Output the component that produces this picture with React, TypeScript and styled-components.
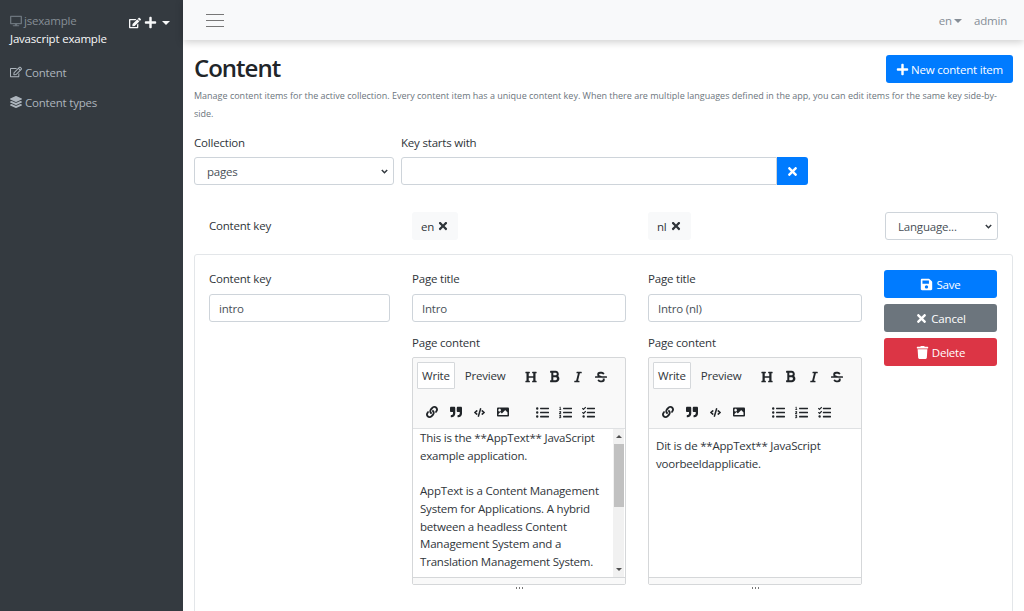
import React from "react"
import styled, { createGlobalStyle } from "styled-components"
import {
  FaBold, FaCode, FaDesktop, FaEdit, FaHeading, FaImage, FaItalic, FaLayerGroup, FaLink,
  FaListOl, FaListUl, FaPlus, FaQuoteRight, FaRegEdit, FaSave, FaStrikethrough, FaTasks, FaTimes, FaTrash,
} from "react-icons/fa"

const chevron = `url("data:image/svg+xml,%3Csvg xmlns='http://www.w3.org/2000/svg' width='7' height='5' viewBox='0 0 7 5'%3E%3Cpath d='M.8.9l2.7 2.8L6.2.9' fill='none' stroke='%23343a40' stroke-width='1.5'/%3E%3C/svg%3E")`

const Global = createGlobalStyle`
  html, body { margin: 0; padding: 0; height: 100%; overflow: hidden; }
  body { font-family: "Open Sans", "Noto Sans", "Liberation Sans", sans-serif; font-size: 11.5px; letter-spacing: -0.2px; color: #2f353a; background: #fff; }
  * { box-sizing: border-box; }
`

const Page = styled.div`
  display: flex;
  width: 1024px;
  height: 611px;
  overflow: hidden;
`
const Sidebar = styled.aside`
  width: 183px;
  flex: none;
  background: #343a40;
  padding: 12px 10px;
`
const Brand = styled.div`
  display: flex;
  justify-content: space-between;
  align-items: flex-start;
`
const AppName = styled.div`
  color: #868e96;
  line-height: 17px;
  display: flex;
  align-items: center;
  gap: 2px;
  svg { color: #6c757d; }
`
const BrandTools = styled.div`
  display: flex;
  align-items: center;
  gap: 3px;
  color: #f8f9fa;
  padding: 3px 3px 0 0;
  margin-top: 1px;
`
const Caret = styled.span<{ $color?: string }>`
  display: inline-block;
  width: 0;
  height: 0;
  margin-left: 2px;
  vertical-align: 2px;
  border-top: 4px solid ${(p) => p.$color || "#f8f9fa"};
  border-left: 4px solid transparent;
  border-right: 4px solid transparent;
`
const AppTitle = styled.div`
  color: #f8f9fa;
  line-height: 17px;
  margin-top: 1px;
`
const SideNav = styled.nav`
  margin-top: 10px;
`
const SideLink = styled.div`
  display: flex;
  align-items: center;
  gap: 3px;
  height: 30px;
  color: #adb5bd;
`
const Column = styled.div`
  flex: 1;
  min-width: 0;
  display: flex;
  flex-direction: column;
`
const TopBar = styled.header`
  height: 40px;
  flex: none;
  background: #f8f9fa;
  box-shadow: 0 2px 8px rgba(0, 0, 0, 0.2);
  display: flex;
  align-items: center;
  justify-content: space-between;
  padding: 0 17px 0 23px;
  position: relative;
  z-index: 1;
`
const Burger = styled.div`
  width: 18px;
  height: 13px;
  border-top: 1px solid #777;
  border-bottom: 1px solid #777;
  position: relative;
  &::after {
    content: "";
    position: absolute;
    left: 0;
    right: 0;
    top: 5px;
    height: 1px;
    background: #777;
  }
`
const TopRight = styled.div`
  display: flex;
  align-items: center;
  gap: 12px;
  color: #868e96;
`
const Main = styled.main`
  padding: 13px 11px 0;
`
const TitleRow = styled.div`
  display: flex;
  justify-content: space-between;
  align-items: flex-start;
`
const Title = styled.h1`
  margin: 0;
  font-size: 24px;
  line-height: 30px;
  font-weight: 600;
  letter-spacing: -1px;
  color: #212529;
`
const Button = styled.button<{ $bg: string; $full?: boolean }>`
  font: inherit;
  letter-spacing: inherit;
  color: #fff;
  background: ${(p) => p.$bg};
  border: 0;
  border-radius: 3px;
  height: 28px;
  padding: 0 9px;
  width: ${(p) => (p.$full ? "100%" : "auto")};
  display: flex;
  align-items: center;
  justify-content: center;
  gap: 3px;
`
const NewButton = styled(Button)`
  margin-top: 2px;
  width: 127px;
  padding: 0;
  gap: 2px;
`
const Lead = styled.p`
  margin: 4px 0 0;
  font-size: 9px;
  line-height: 18px;
  letter-spacing: 0;
  color: #6c757d;
`
const FilterRow = styled.div`
  display: flex;
  gap: 7px;
  margin-top: 11px;
`
const Field = styled.div<{ $width?: number }>`
  width: ${(p) => (p.$width ? p.$width + "px" : "auto")};
  flex: ${(p) => (p.$width ? "none" : "1")};
`
const Label = styled.label`
  display: block;
  line-height: 17px;
  margin-bottom: 6px;
`
const CardLabel = styled(Label)`
  margin-bottom: 7px;
`
const SectionLabel = styled(Label)`
  margin-top: 12px;
`
const Select = styled.select`
  font: inherit;
  letter-spacing: inherit;
  color: #495057;
  width: 100%;
  height: 28px;
  appearance: none;
  background: #fff ${chevron} no-repeat right 5px center;
  border: 1px solid #ced4da;
  border-radius: 3px;
  padding: 0 12px;
`
const Input = styled.input`
  font: inherit;
  letter-spacing: inherit;
  color: #495057;
  width: 100%;
  height: 28px;
  background: #fff;
  border: 1px solid #ced4da;
  border-radius: 3px;
  padding: 0 9px;
`
const InputGroup = styled.div`
  display: flex;
  width: 407px;
  input { border-radius: 3px 0 0 3px; }
`
const ClearButton = styled(Button)`
  width: 31px;
  flex: none;
  border-radius: 0 3px 3px 0;
  padding: 0;
`
const HeaderRow = styled.div`
  display: grid;
  grid-template-columns: 203px 236px 237px 113px;
  align-items: center;
  margin-top: 27px;
  padding-left: 15px;
`
const HeaderKey = styled.div`
  margin-top: -2px;
`
const LangChip = styled.div`
  display: inline-flex;
  align-items: center;
  gap: 3px;
  height: 28px;
  padding: 0 9px;
  background: #f8f9fa;
  border-radius: 3px;
`
const Card = styled.section`
  display: grid;
  grid-template-columns: 203px 236px 236px 113px;
  margin-top: 14px;
  height: 400px;
  padding: 15px 15px 0 14px;
  border: 1px solid #e3e6e9;
  border-radius: 3px;
`
const CardColumn = styled.div`
  padding-right: 22px;
`
const ActionColumn = styled.div`
  display: flex;
  flex-direction: column;
  gap: 6px;
`
const Editor = styled.div`
  border: 1px solid #d5d7d9;
  border-radius: 2px;
  height: 228px;
  display: flex;
  flex-direction: column;
  background: #f9f9f9;
`
const ToolRows = styled.div`
  height: 71px;
  flex: none;
  border-bottom: 1px solid #dfe1e3;
  padding: 4px 4px 0;
`
const ToolRow = styled.div`
  display: flex;
  align-items: center;
  height: 27px;
  & + & { margin-top: 11px; height: 24px; }
`
const Tab = styled.div<{ $active?: boolean }>`
  height: 27px;
  display: flex;
  align-items: center;
  padding: 0 4px;
  margin-right: 5px;
  border: 1px solid ${(p) => (p.$active ? "#d5d8db" : "transparent")};
  background: ${(p) => (p.$active ? "#fff" : "transparent")};
  border-radius: 1px;
`
const ToolGroup = styled.div<{ $gap?: number; $left?: number; $top?: number }>`
  display: flex;
  align-items: center;
  gap: ${(p) => p.$gap ?? 10}px;
  margin-left: ${(p) => p.$left ?? 0}px;
  margin-top: ${(p) => p.$top ?? 0}px;
  color: #212529;
`
const EditorBody = styled.div`
  flex: 1;
  min-height: 0;
  display: flex;
  background: #fff;
`
const Text = styled.textarea<{ $top: number }>`
  flex: 1;
  min-width: 0;
  display: block;
  font: inherit;
  letter-spacing: inherit;
  line-height: 17.7px;
  color: #2f353a;
  border: 0;
  outline: 0;
  resize: none;
  padding: ${(p) => p.$top}px 7px 0;
  background: #fff;
  overflow: hidden;
`
const ScrollTrack = styled.div`
  width: 11px;
  flex: none;
  margin-right: 1px;
  background: #f1f1f1;
  display: flex;
  flex-direction: column;
  align-items: stretch;
`
const ScrollButton = styled.div`
  height: 15px;
  flex: none;
  display: flex;
  align-items: center;
  justify-content: center;
`
const ArrowUp = styled.span`
  border-left: 3px solid transparent;
  border-right: 3px solid transparent;
  border-bottom: 3px solid #505050;
`
const ArrowDown = styled.span`
  border-left: 3px solid transparent;
  border-right: 3px solid transparent;
  border-top: 3px solid #505050;
`
const ScrollThumb = styled.div`
  height: 63px;
  flex: none;
  background: #c1c1c1;
  margin-left: 1px;
`
const ScrollGap = styled.div`
  flex: 1;
`
const Grip = styled.div`
  height: 7px;
  flex: none;
  border-top: 1px solid #d5d7d9;
  background: #f9f9f9;
  position: relative;
  &::after {
    content: "";
    position: absolute;
    left: 50%;
    bottom: -5px;
    width: 1px;
    height: 2px;
    background: #777;
    box-shadow: -3px 0 #777, 3px 0 #777;
  }
`

const enText = `This is the **AppText** JavaScript example application.

AppText is a Content Management System for Applications. A hybrid between a headless Content Management System and a Translation Management System.

AppText helps you to manage content for your apps. Content can be text, labels or whole pages, in every language that the app has.`

const nlText = `Dit is de **AppText** JavaScript voorbeeldapplicatie.`

function MdEditor({ value, scroll }: { value: string; scroll?: boolean }) {
  return (
    <Editor>
      <ToolRows>
        <ToolRow>
          <Tab $active>Write</Tab>
          <Tab>Preview</Tab>
          <ToolGroup $left={10} $top={2} $gap={11}>
            <FaHeading size={12} />
            <FaBold size={13} />
            <FaItalic size={12} />
            <FaStrikethrough size={12} />
          </ToolGroup>
        </ToolRow>
        <ToolRow>
          <ToolGroup $left={9} $gap={12}>
            <FaLink size={12} />
            <FaQuoteRight size={12} />
            <FaCode size={11} />
            <FaImage size={12} />
          </ToolGroup>
          <ToolGroup $left={27} $gap={10}>
            <FaListUl size={13} />
            <FaListOl size={13} />
            <FaTasks size={13} />
          </ToolGroup>
        </ToolRow>
      </ToolRows>
      <EditorBody>
        <Text readOnly value={value} $top={scroll ? 0 : 8} />
        {scroll && (
          <ScrollTrack>
            <ScrollButton><ArrowUp /></ScrollButton>
            <ScrollThumb />
            <ScrollGap />
            <ScrollButton><ArrowDown /></ScrollButton>
          </ScrollTrack>
        )}
      </EditorBody>
      <Grip />
    </Editor>
  )
}

export default function App() {
  return (
    <Page>
      <Global />
      <Sidebar>
        <Brand>
          <div>
            <AppName><FaDesktop size={12} />jsexample</AppName>
            <AppTitle>Javascript example</AppTitle>
          </div>
          <BrandTools>
            <FaEdit size={12} />
            <FaPlus size={13} />
            <Caret />
          </BrandTools>
        </Brand>
        <SideNav>
          <SideLink><FaRegEdit size={12} />Content</SideLink>
          <SideLink><FaLayerGroup size={12} />Content types</SideLink>
        </SideNav>
      </Sidebar>
      <Column>
        <TopBar>
          <Burger />
          <TopRight>
            <span>en<Caret $color="#868e96" /></span>
            <span>admin</span>
          </TopRight>
        </TopBar>
        <Main>
          <TitleRow>
            <Title>Content</Title>
            <NewButton $bg="#007bff"><FaPlus size={13} />New content item</NewButton>
          </TitleRow>
          <Lead>
            Manage content items for the active collection. Every content item has a unique content key. When there are multiple languages defined in the app, you can edit items for the same key side-by-side.
          </Lead>
          <FilterRow>
            <Field $width={200}>
              <Label>Collection</Label>
              <Select defaultValue="pages"><option>pages</option></Select>
            </Field>
            <Field>
              <Label>Key starts with</Label>
              <InputGroup>
                <Input />
                <ClearButton $bg="#007bff"><FaTimes size={13} /></ClearButton>
              </InputGroup>
            </Field>
          </FilterRow>
          <HeaderRow>
            <HeaderKey>Content key</HeaderKey>
            <div><LangChip>en <FaTimes size={12} /></LangChip></div>
            <div><LangChip>nl <FaTimes size={12} /></LangChip></div>
            <Select defaultValue="Language..."><option>Language...</option></Select>
          </HeaderRow>
          <Card>
            <CardColumn>
              <CardLabel>Content key</CardLabel>
              <Input readOnly value="intro" />
            </CardColumn>
            <CardColumn>
              <CardLabel>Page title</CardLabel>
              <Input readOnly value="Intro" />
              <SectionLabel>Page content</SectionLabel>
              <MdEditor value={enText} scroll />
            </CardColumn>
            <CardColumn>
              <CardLabel>Page title</CardLabel>
              <Input readOnly value="Intro (nl)" />
              <SectionLabel>Page content</SectionLabel>
              <MdEditor value={nlText} />
            </CardColumn>
            <ActionColumn>
              <Button $bg="#007bff" $full><FaSave size={13} />Save</Button>
              <Button $bg="#6c757d" $full><FaTimes size={13} />Cancel</Button>
              <Button $bg="#dc3545" $full><FaTrash size={13} />Delete</Button>
            </ActionColumn>
          </Card>
        </Main>
      </Column>
    </Page>
  )
}
